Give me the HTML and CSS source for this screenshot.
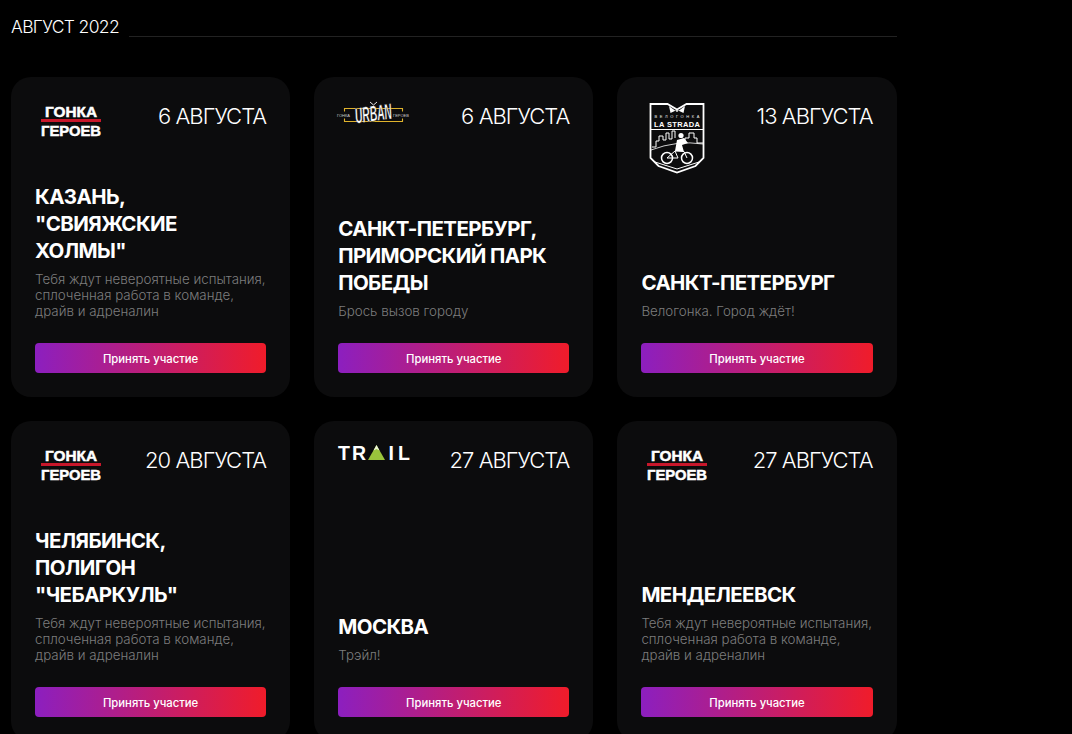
FILE: index.html
```html
<!DOCTYPE html>
<html lang="ru">
<head>
<meta charset="utf-8">
<title>Август 2022</title>
<link rel="stylesheet" href="styles.css">
</head>
<body>
<main class="page">
  <header class="month">
    <h2 class="month-title">АВГУСТ 2022</h2>
    <span class="month-line"></span>
  </header>
  <section class="grid">
    <article class="card">
      <div class="card-top">
        <svg class="logo logo-g" viewBox="0 0 60 32">
          <text x="4" y="12" class="lg-text" textLength="52" lengthAdjust="spacingAndGlyphs">ГОНКА</text>
          <rect x="0" y="14" width="60" height="3" fill="#c8172b"/>
          <text x="0" y="30.500" class="lg-text" textLength="60" lengthAdjust="spacingAndGlyphs">ГЕРОЕВ</text>
        </svg>
        <span class="date">6 АВГУСТА</span>
      </div>
      <div class="card-body">
        <h3 class="title">КАЗАНЬ,<br>"СВИЯЖСКИЕ<br>ХОЛМЫ"</h3>
        <p class="desc">Тебя ждут невероятные испытания, сплоченная работа в команде, драйв и адреналин</p>
      </div>
      <a class="btn">Принять участие</a>
    </article>
    <article class="card">
      <div class="card-top">
        <svg class="logo logo-u" viewBox="0 0 72 28">
          <path d="M32 1l3.500 3L39 1" fill="none" stroke="#fff" stroke-width=".9"/>
          <path d="M6.500 10.500V7.500h58v3M6.500 17.500v3h58v-3" fill="none" stroke="#e0b32c" stroke-width="1.100"/>
          <text x="-1" y="15.500" class="lu-small">ГОНКА</text>
          <text x="55" y="15.500" class="lu-small">ГЕРОЕВ</text>
          <text x="35.500" y="20" class="lu-main" transform="rotate(-8 35.500 14)" textLength="37" lengthAdjust="spacingAndGlyphs">URBAN</text>
        </svg>
        <span class="date">6 АВГУСТА</span>
      </div>
      <div class="card-body">
        <h3 class="title">САНКТ-ПЕТЕРБУРГ, ПРИМОРСКИЙ ПАРК ПОБЕДЫ</h3>
        <p class="desc">Брось вызов городу</p>
      </div>
      <a class="btn">Принять участие</a>
    </article>
    <article class="card">
      <div class="card-top">
        <svg class="logo logo-s" viewBox="0 0 56 72">
          <path d="M1.500 2h17l9.500 5.500L37.500 2h17v54l-8 8L28 70.500 9.500 64l-8-8z" fill="#0c0c0d" stroke="#fff" stroke-width="1.800"/>
          <path d="M20 4l8 6 8-6-1.500 7L28 8l-6.500 3z" fill="#fff"/>
          <text x="28" y="15.500" class="ls-small" textLength="45">ВЕЛОГОНКА</text>
          <text x="28" y="24.500" class="ls-main" textLength="46">LA STRADA</text>
          <path d="M1.500 27.500h53" stroke="#fff" stroke-width="1"/>
          <path d="M3 45h4v-6h3v-5h4v4h3v-7h3v6h3v-8h3v7M36 40v-4h4v-5h5v5h3v5h6" fill="none" stroke="#fff" stroke-width="1"/>
          <path d="M2 48q26-10 52-6" fill="none" stroke="#fff" stroke-width=".8"/>
          <circle cx="18" cy="56" r="5.500" fill="#0c0c0d" stroke="#fff" stroke-width="1.500"/>
          <circle cx="38" cy="56" r="5.500" fill="#0c0c0d" stroke="#fff" stroke-width="1.500"/>
          <path d="M18 56l8-7 9 .5 3 6.500M26 49l3 7H18" fill="none" stroke="#fff" stroke-width="1"/>
          <path d="M26 49l2-11 7-2 4 5-6 2 2 7-5-1z" fill="#fff"/>
          <circle cx="32" cy="33.500" r="2.600" fill="#fff"/>
          <path d="M6 60l22 7 22-7" fill="none" stroke="#fff" stroke-width="1"/>
        </svg>
        <span class="date">13 АВГУСТА</span>
      </div>
      <div class="card-body">
        <h3 class="title">САНКТ-ПЕТЕРБУРГ</h3>
        <p class="desc">Велогонка. Город ждёт!</p>
      </div>
      <a class="btn">Принять участие</a>
    </article>
    <article class="card">
      <div class="card-top">
        <svg class="logo logo-g" viewBox="0 0 60 32">
          <text x="4" y="12" class="lg-text" textLength="52" lengthAdjust="spacingAndGlyphs">ГОНКА</text>
          <rect x="0" y="14" width="60" height="3" fill="#c8172b"/>
          <text x="0" y="30.500" class="lg-text" textLength="60" lengthAdjust="spacingAndGlyphs">ГЕРОЕВ</text>
        </svg>
        <span class="date">20 АВГУСТА</span>
      </div>
      <div class="card-body">
        <h3 class="title">ЧЕЛЯБИНСК,<br>ПОЛИГОН<br>"ЧЕБАРКУЛЬ"</h3>
        <p class="desc">Тебя ждут невероятные испытания, сплоченная работа в команде, драйв и адреналин</p>
      </div>
      <a class="btn">Принять участие</a>
    </article>
    <article class="card">
      <div class="card-top">
        <svg class="logo logo-t" viewBox="0 0 72 16">
          <text x="0" y="14.500" class="lt-text">T</text>
          <text x="14" y="14.500" class="lt-text">R</text>
          <path d="M38.500 0l8.500 15H30z" fill="#9ac43c"/>
          <path d="M38.500 0l3 5.500-3-1.500-3 1.500z" fill="#eef5d8"/>
          <text x="50.500" y="14.500" class="lt-text">I</text>
          <text x="60" y="14.500" class="lt-text">L</text>
        </svg>
        <span class="date">27 АВГУСТА</span>
      </div>
      <div class="card-body">
        <h3 class="title">МОСКВА</h3>
        <p class="desc">Трэйл!</p>
      </div>
      <a class="btn">Принять участие</a>
    </article>
    <article class="card">
      <div class="card-top">
        <svg class="logo logo-g" viewBox="0 0 60 32">
          <text x="4" y="12" class="lg-text" textLength="52" lengthAdjust="spacingAndGlyphs">ГОНКА</text>
          <rect x="0" y="14" width="60" height="3" fill="#c8172b"/>
          <text x="0" y="30.500" class="lg-text" textLength="60" lengthAdjust="spacingAndGlyphs">ГЕРОЕВ</text>
        </svg>
        <span class="date">27 АВГУСТА</span>
      </div>
      <div class="card-body">
        <h3 class="title">МЕНДЕЛЕЕВСК</h3>
        <p class="desc">Тебя ждут невероятные испытания, сплоченная работа в команде, драйв и адреналин</p>
      </div>
      <a class="btn">Принять участие</a>
    </article>
  </section>
</main>
</body>
</html>
```
FILE: styles.css
```css
* { box-sizing: border-box; }
html, body { margin: 0; padding: 0; height: 734px; overflow: hidden; background: #000; }
body { font-family: Inter, "Noto Sans", sans-serif; color: #fff; }
.page { width: 897px; padding: 16px 0 0 11px; }
.month { display: flex; align-items: flex-start; gap: 10px; height: 61px; }
.month-title { margin: 0; font-size: 17.500px; line-height: 22px; font-weight: 300; letter-spacing: -.65px; white-space: nowrap; }
.month-line { flex: 1; height: 1px; margin-top: 20px; background: #222; }
.grid { display: grid; grid-template-columns: repeat(3, 279.2px); gap: 24px; }
.card { height: 320px; padding: 24px; border-radius: 20px; background: #0c0c0d; display: flex; flex-direction: column; }
.card-top { display: flex; justify-content: space-between; align-items: flex-start; }
.date { font-size: 22px; line-height: 30px; font-weight: 300; letter-spacing: -.95px; white-space: nowrap; }
.logo { display: block; flex: none; overflow: visible; }
.logo-g { width: 60px; height: 32px; margin: 4px 0 0 6px; }
.logo-u { width: 72px; height: 28px; margin-top: 0; }
.logo-s { width: 56px; height: 72px; margin: 1px 0 0 8px; }
.logo-t { width: 72px; height: 16px; margin-top: 0; }
.lg-text { font-family: "Liberation Sans", sans-serif; font-weight: 700; font-size: 15px; fill: #fff; stroke: #fff; stroke-width: .5px; }
.lu-small { font-family: "Liberation Sans", sans-serif; font-size: 4px; fill: #ccc; }
.lu-main { font-family: "Liberation Sans", sans-serif; font-style: italic; font-weight: 700; font-size: 22px; fill: #fff; stroke: #0c0c0d; stroke-width: .4px; text-anchor: middle; }
.ls-small { font-family: "Liberation Sans", sans-serif; font-size: 4px; fill: #eee; text-anchor: middle; }
.ls-main { font-family: "Liberation Sans", sans-serif; font-weight: 700; font-size: 7.500px; fill: #fff; text-anchor: middle; }
.lt-text { font-family: "Liberation Sans", sans-serif; font-weight: 700; font-size: 19.500px; fill: #fff; }
.card-body { flex: 1; display: flex; flex-direction: column; justify-content: flex-end; padding-bottom: 24px; }
.title { margin: 0; font-size: 20.500px; line-height: 27px; font-weight: 700; letter-spacing: -.6px; }
.desc { margin: 7px 0 0; font-size: 13.350px; line-height: 16px; font-weight: 300; color: #7d7d7d; }
.btn { display: block; height: 30px; border-radius: 4px; background: linear-gradient(90deg, #8c1fbf, #f01c2a); font-size: 11.300px; line-height: 32px; font-weight: 500; text-align: center; color: #fff; }
```
